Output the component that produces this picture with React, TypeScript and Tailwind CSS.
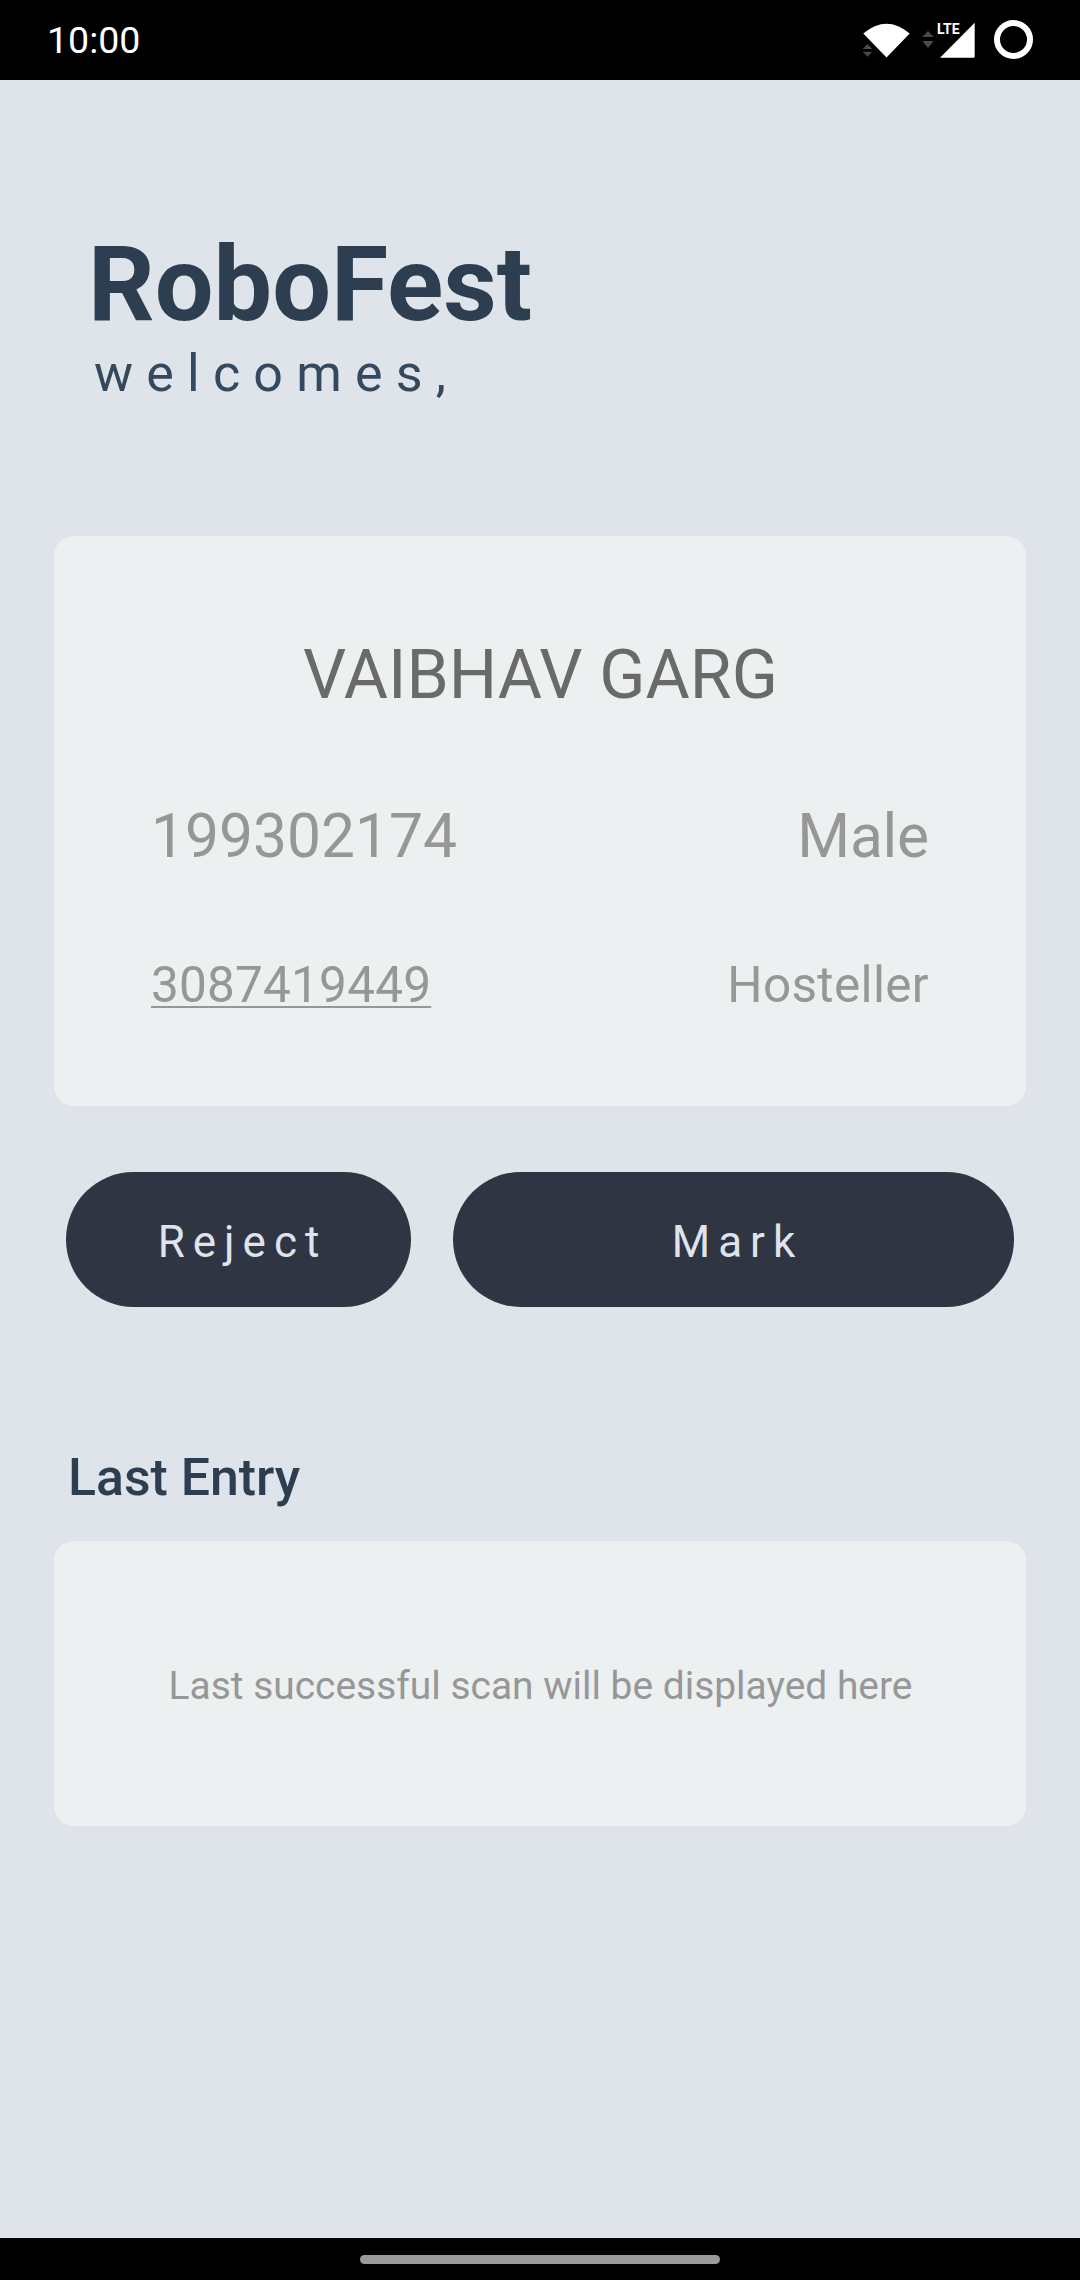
export default function App() {
  return (
    <div className="flex h-[2280px] w-[1080px] flex-col bg-[#dfe4ea] font-['Roboto',sans-serif]">
      <header className="flex h-20 shrink-0 items-center justify-between bg-black pl-[47px] pr-[46px] text-white">
        <span className="pt-[2px] text-[37.5px] leading-none">10:00</span>
        <svg width="172" height="80" viewBox="0 0 172 80" fill="white">
          <path d="M1.300 33.500Q24.500 14 47.700 33.500L24.500 57.500Z" />
          <path d="M0.700 49L5.500 44L10.300 49ZM0.700 51.700L5.500 56.700L10.300 51.700Z" fill="#4a4a4a" />
          <path d="M60.300 37L66 31L71.700 37ZM60.300 41L66 48L71.700 41Z" fill="#4a4a4a" />
          <path d="M78 57.700L112.700 22.700V56.500Q112.700 57.700 111.500 57.700Z" />
          <text x="75" y="34" fontSize="15" fontWeight="700" textLength="22.500" lengthAdjust="spacingAndGlyphs">LTE</text>
          <circle cx="151.500" cy="39.500" r="16.500" fill="none" stroke="white" strokeWidth="6" />
        </svg>
      </header>
      <main className="flex flex-1 flex-col px-[54px]">
        <h1 className="mt-[143px] pl-[34px] text-[104.2px] font-bold leading-[122px] text-[#2c3e50]">RoboFest</h1>
        <p className="-mt-[2px] pl-10 text-[52px] leading-[61px] tracking-[13.2px] text-[#34495e]">welcomes,</p>
        <section className="mt-[132px] h-[570px] rounded-[20px] bg-[#ecf0f1] px-[97px] text-[#979797]">
          <h2 className="pt-[99px] pl-px text-center text-[67.9px] leading-[80px] text-[#6a6a6a]">VAIBHAV GARG</h2>
          <div className="mt-[87px] flex justify-between text-[60.5px] leading-[70px]"><span>199302174</span><span className="tracking-[-0.2px]">Male</span></div>
          <div className="mt-[83px] flex justify-between text-[49.5px] leading-[60px] tracking-[0.2px]"><span className="underline decoration-[2px] underline-offset-[4px] [text-decoration-skip-ink:none]">3087419449</span><span className="tracking-[0.35px]">Hosteller</span></div>
        </section>
        <div className="mt-[66px] flex gap-[42px] px-3 text-[44px] tracking-[8px] text-[#dfe4ea]">
          <button className="h-[135px] w-[345px] rounded-full bg-[#2f3542] pt-[5px] pl-2">Reject</button>
          <button className="h-[135px] flex-1 rounded-full bg-[#2f3542] pt-[5px] pl-2">Mark</button>
        </div>
        <h3 className="mt-[140px] pl-[14px] text-[51.8px] font-medium leading-[61px] text-[#2c3e50]">Last Entry</h3>
        <section className="mt-[33px] flex h-[285px] items-center justify-center rounded-[20px] bg-[#ecf0f1] pt-[6px] pl-px text-[38.950px] text-[#979797]">Last successful scan will be displayed here</section>
      </main>
      <footer className="flex h-[42px] items-center justify-center bg-black pt-px"><div className="h-[9px] w-[360px] rounded-full bg-[#9a9a9a]" /></footer>
    </div>
  );
}
